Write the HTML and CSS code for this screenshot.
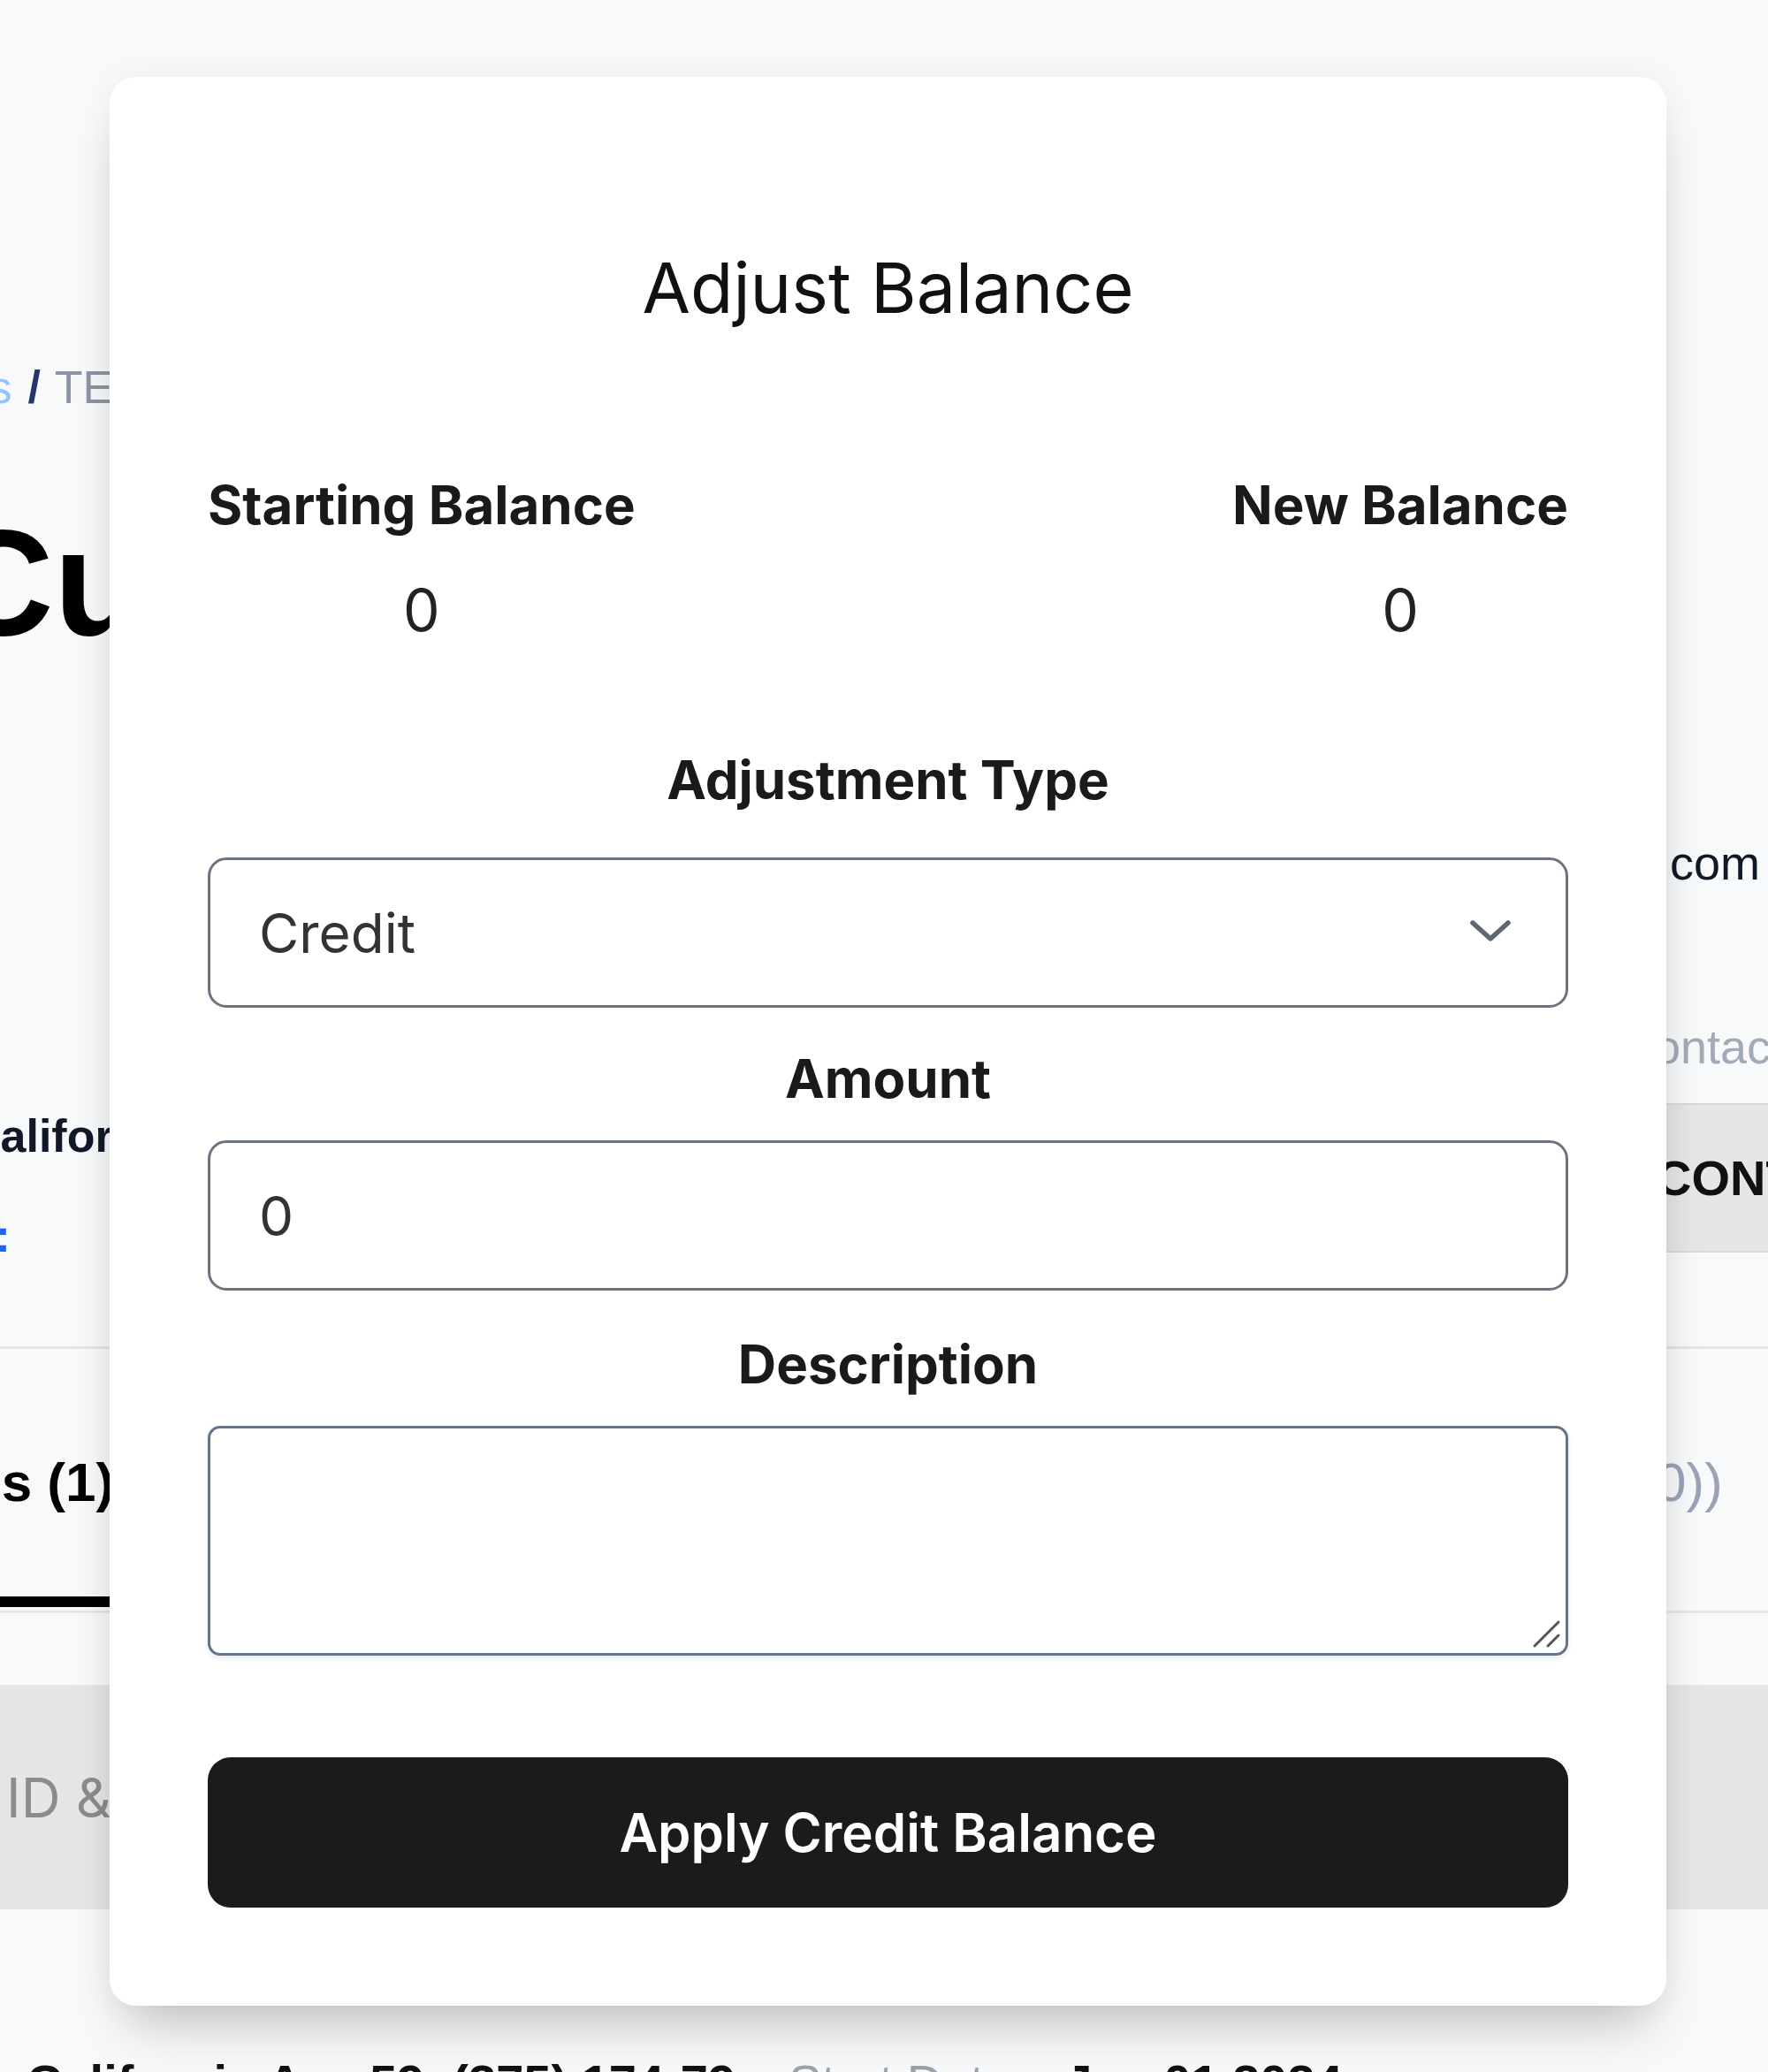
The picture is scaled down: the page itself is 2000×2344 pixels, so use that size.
FILE: index.html
```html
<!DOCTYPE html>
<html lang="en">
<head>
<meta charset="utf-8">
<title>Adjust Balance</title>
<link rel="stylesheet" href="styles.css">
</head>
<body>
<div class="page">
  <div class="top">
    <div class="col-left">
      <div class="crumbs"><span class="crumb-prev">Customers</span><span class="crumb-sep">/</span><span class="crumb-cur">TEST CUSTOMER</span></div>
      <h1 class="page-title">Customer Details</h1>
      <div class="addr">California</div>
      <div class="link">Details:</div>
    </div>
    <div class="col-mid"></div>
    <div class="col-right">
      <div class="r-line email"><span class="r-pre">test@example.</span>com</div>
      <div class="r-line contact-label"><span class="r-pre r-pre-c">C</span>ontact</div>
      <div class="contact-btn">CONTACT</div>
    </div>
  </div>
  <div class="divider"></div>
  <div class="tabs">
    <div class="tab tab-active">Invoices (1)</div>
    <div class="tab-mid"></div>
    <div class="tab tab-right"><span class="r-pre-t">Payments (</span>0))</div>
  </div>
  <div class="table-head">
    <div class="th">ID &amp; Date</div>
  </div>
  <div class="table-row">
    <span class="td">California Ave 59, (375) 174-79</span>
    <span class="td td-muted">Start Date</span>
    <span class="td">Jan 01 2024</span>
  </div>
</div>

<div class="modal" role="dialog" aria-labelledby="modal-title">
  <h2 class="modal-title" id="modal-title">Adjust Balance</h2>
  <div class="balances">
    <div class="balance">
      <div class="label">Starting Balance</div>
      <div class="value">0</div>
    </div>
    <div class="balance">
      <div class="label">New Balance</div>
      <div class="value">0</div>
    </div>
  </div>
  <div class="field field-type">
    <label class="label field-label" for="type">Adjustment Type</label>
    <div class="select-wrap">
      <select class="control" id="type">
        <option>Credit</option>
        <option>Debit</option>
      </select>
      <svg class="chev" viewBox="0 0 48 26" aria-hidden="true"><path d="M4 4 L24 22 L44 4" fill="none" stroke="#5f6673" stroke-width="5.5" stroke-linecap="round" stroke-linejoin="round"/></svg>
    </div>
  </div>
  <div class="field">
    <label class="label field-label" for="amount">Amount</label>
    <input class="control" id="amount" type="text" value="0">
  </div>
  <div class="field field-desc">
    <label class="label field-label" for="desc">Description</label>
    <div class="select-wrap">
      <textarea class="control textarea" id="desc"></textarea>
      <svg class="resize" viewBox="0 0 34 34" aria-hidden="true"><path d="M4 31 L31 4 M19 31 L31 19" fill="none" stroke="#555" stroke-width="3" stroke-linecap="round"/></svg>
    </div>
  </div>
  <button class="apply" type="button">Apply Credit Balance</button>
</div>
</body>
</html>
```
FILE: styles.css
```css
html, body {
  margin: 0;
  padding: 0;
}

body {
  width: 2000px;
  height: 2344px;
  overflow: hidden;
  position: relative;
  background: #f8f9fb;
  font-family: Inter, "Noto Sans", sans-serif;
}

/* ---------- background page ---------- */
.page {
  font-family: "Liberation Sans", Arial, sans-serif;
  color: #111;
}

.top {
  display: flex;
  height: 1523px;
}

.col-left {
  width: 124px;
  flex: none;
}

.col-mid {
  flex: 1;
}

.col-right {
  width: 115px;
  flex: none;
}

.crumbs {
  margin-top: 398px;
  height: 80px;
  line-height: 80px;
  font-size: 52px;
  white-space: nowrap;
  margin-left: -238px;
}

.crumb-prev {
  color: #93c5fd;
}

.crumb-sep {
  color: #24366a;
  font-weight: 700;
  margin: 0 16px 0 18px;
}

.crumb-cur {
  color: #8b95a7;
}

.page-title {
  margin: 91px 0 0 -62px;
  font-size: 170px;
  line-height: 180px;
  font-weight: 700;
  color: #000;
  white-space: nowrap;
}

.addr {
  margin: 501px 0 0 -37px;
  height: 70px;
  line-height: 70px;
  font-size: 52px;
  font-weight: 700;
  color: #111827;
  white-space: nowrap;
}

.link {
  margin: 43px 0 0 -176px;
  height: 70px;
  line-height: 70px;
  font-size: 52px;
  font-weight: 700;
  color: #2563eb;
  white-space: nowrap;
}

.r-line {
  display: flex;
  white-space: nowrap;
  margin-left: -600px;
  height: 70px;
  line-height: 70px;
  font-size: 54px;
}

.r-pre {
  width: 604px;
  flex: none;
  display: flex;
  justify-content: flex-end;
  overflow: hidden;
}

.email {
  margin-top: 941px;
  color: #111827;
}

.contact-label {
  margin-top: 138px;
  color: #a3aab7;
}

.r-pre-c {
  width: 586px;
}

.contact-btn {
  margin: 29px 0 0 -400px;
  padding-left: 388px;
  height: 169px;
  line-height: 165px;
  box-sizing: border-box;
  background: #e5e6e8;
  border-top: 2px solid #dcd8d5;
  border-bottom: 2px solid #dcd8d5;
  font-size: 56px;
  font-weight: 700;
  white-space: nowrap;
  color: #111;
}

.divider {
  height: 3px;
  background: #e7e4e2;
}

.tabs {
  display: flex;
  align-items: flex-start;
  height: 296px;
  border-bottom: 3px solid #e6e7ea;
}

.tab {
  height: 280px;
  line-height: 302px;
  font-size: 62px;
  font-weight: 700;
  white-space: nowrap;
}

.tab-active {
  width: 124px;
  flex: none;
  text-indent: -212px;
  border-bottom: 12px solid #000;
  color: #000;
}

.tab-mid {
  width: 1161px;
  flex: none;
}

.tab-right {
  display: flex;
  width: 715px;
  flex: none;
  overflow: hidden;
  color: #9aa3b8;
  font-weight: 400;
}

.r-pre-t {
  width: 588px;
  flex: none;
  display: flex;
  justify-content: flex-end;
  overflow: hidden;
}

.table-head {
  margin-top: 81px;
  height: 254px;
  background: #e5e6e8;
  display: flex;
  align-items: center;
}

.th {
  padding-left: 7px;
  font-family: Inter, "Noto Sans", sans-serif;
  font-size: 62px;
  color: #8c8c8c;
  white-space: nowrap;
}

.table-row {
  margin-top: 166px;
  display: flex;
  gap: 60px;
  padding-left: 30px;
  font-size: 56px;
  font-weight: 700;
  line-height: 60px;
  white-space: nowrap;
}

.td-muted {
  color: #9ca3af;
  font-weight: 400;
}

/* ---------- modal ---------- */
.modal {
  position: absolute;
  left: 124px;
  top: 87px;
  width: 1761px;
  box-sizing: border-box;
  padding: 191px 111px 111px;
  background: #fff;
  border-radius: 30px;
  box-shadow: 0 40px 60px -20px rgba(0, 0, 0, 0.22), 0 0 40px rgba(0, 0, 0, 0.05);
  color: #111;
  z-index: 10;
}

.modal-title {
  margin: 0;
  text-align: center;
  font-size: 79px;
  line-height: 95px;
  font-weight: 400;
  color: #111;
}

.balances {
  display: flex;
  justify-content: space-between;
  margin-top: 162px;
}

.balance {
  display: flex;
  flex-direction: column;
  align-items: center;
}

.label {
  font-size: 60px;
  line-height: 72px;
  font-weight: 700;
  color: #1a1a1a;
}

.value {
  margin-top: 44px;
  font-size: 66px;
  line-height: 79px;
  color: #222;
}

.field {
  margin-top: 44px;
  display: flex;
  flex-direction: column;
}

.field-label {
  display: block;
  text-align: center;
  margin-bottom: 34px;
}

.field-type {
  margin-top: 116px;
}

.field-type .field-label {
  margin-bottom: 52px;
}

.field-desc {
  margin-top: 47px;
}

.select-wrap {
  position: relative;
}

.control {
  display: block;
  width: 100%;
  height: 170px;
  margin: 0;
  border: 3px solid #6b7280;
  border-radius: 21px;
  box-sizing: border-box;
  padding: 0 0 0 55px;
  font-family: Inter, "Noto Sans", sans-serif;
  font-size: 62px;
  color: #333;
  background: #fff;
  appearance: none;
  -webkit-appearance: none;
  outline: none;
}

.chev {
  position: absolute;
  right: 64px;
  top: 70px;
  width: 48px;
  height: 26px;
}

.textarea {
  height: 260px;
  resize: none;
  border-color: #64748b;
  border-radius: 14px;
  box-shadow: 0 3px 6px rgba(0, 0, 0, 0.08);
}

.resize {
  position: absolute;
  right: 8px;
  bottom: 8px;
  width: 34px;
  height: 34px;
}

.apply {
  display: block;
  margin-top: 115px;
  width: 100%;
  height: 170px;
  border: 0;
  border-radius: 26px;
  background: #1b1b1b;
  color: #fff;
  font-family: Inter, "Noto Sans", sans-serif;
  font-size: 60px;
  font-weight: 600;
}
```
